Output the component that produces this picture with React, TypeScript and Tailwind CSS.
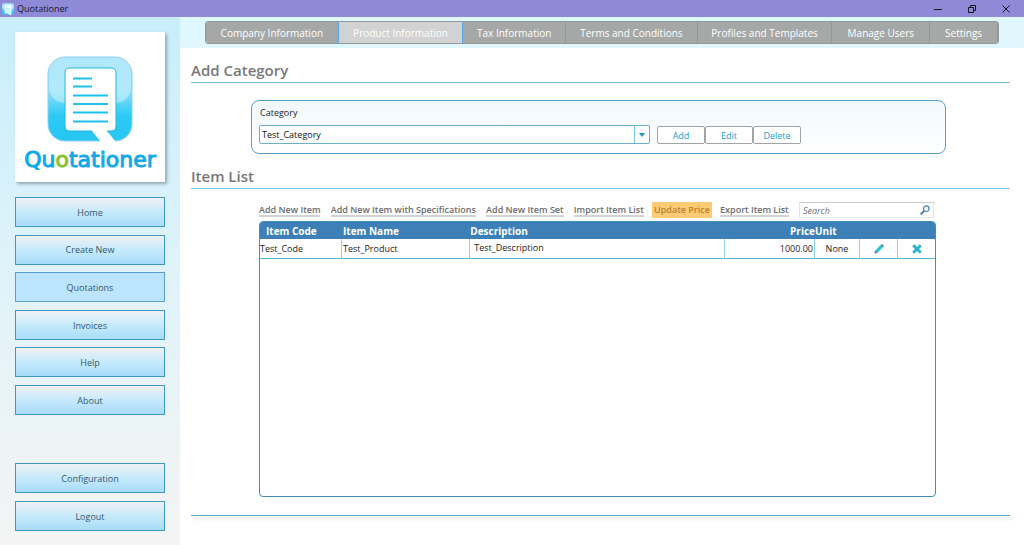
import type { ReactNode } from 'react'

const mainMenu = ['Home', 'Create New', 'Quotations', 'Invoices', 'Help', 'About']
const accountMenu = ['Configuration', 'Logout']

const tabs = [
  'Company Information',
  'Product Information',
  'Tax Information',
  'Terms and Conditions',
  'Profiles and Templates',
  'Manage Users',
  'Settings',
]

const itemActions = [
  'Add New Item',
  'Add New Item with Specifications',
  'Add New Item Set',
  'Import Item List',
  'Update Price',
  'Export Item List',
]

const items = [
  { code: 'Test_Code', name: 'Test_Product', description: 'Test_Description', price: '1000.00', unit: 'None' },
]

const cell = 'border-r border-b border-r-[#8fd3e6] border-b-[#4fb9d6]'

function LogoMark({ className }: { className: string }) {
  return (
    <svg viewBox="0 0 86 86" className={className} aria-hidden>
      <defs>
        <linearGradient id="tile" x1="0" y1="0" x2="0" y2="1">
          <stop offset="0" stopColor="#a9e6fb" />
          <stop offset="0.4" stopColor="#8fe0f9" />
          <stop offset="0.7" stopColor="#2ccaf5" />
          <stop offset="1" stopColor="#27c6f3" />
        </linearGradient>
        <linearGradient id="gloss" x1="0" y1="0" x2="0" y2="1">
          <stop offset="0" stopColor="#fff" stopOpacity="0.1" />
          <stop offset="1" stopColor="#fff" stopOpacity="0.4" />
        </linearGradient>
      </defs>
      <rect x="1" y="1" width="84" height="84" rx="17" fill="url(#tile)" stroke="#8fd0f2" />
      <path d="M2 18Q2 2 18 2H68Q84 2 84 18V32Q82 47 66 47H20Q4 47 2 32Z" fill="url(#gloss)" />
      <path
        d="M23 12H64Q69 12 69 17V70Q69 75 64 75H60L69 86H54L45 75H23Q18 75 18 70V17Q18 12 23 12Z"
        fill="#fff"
      />
      <path
        d="M45 75H23Q18 75 18 70V17Q18 12 23 12H64Q69 12 69 17V70Q69 75 64 75H60"
        fill="none"
        stroke="#22b4e0"
      />
      <path
        d="M26 22.5H45M26 30.5H45M26 39.5H61M26 48H61M26 56.5H61M26 65.5H61"
        stroke="#1fc0ee"
        strokeWidth="2"
      />
    </svg>
  )
}

function TitleBar() {
  return (
    <header className="flex h-[17px] items-center bg-[#8e8ad8] text-[#16161e]">
      <LogoMark className="ml-[2px] h-3 w-3" />
      <span className="ml-[3px] flex-1 text-[9px] leading-none">Quotationer</span>
      <div className="flex items-center gap-[26px] pr-[14px]">
        <button aria-label="Minimize">
          <svg viewBox="0 0 8 8" className="h-2 w-2" fill="none" stroke="currentColor">
            <path d="M0 4.5H8" />
          </svg>
        </button>
        <button aria-label="Restore">
          <svg viewBox="0 0 8 8" className="h-2 w-2" fill="none" stroke="currentColor">
            <path d="M0.5 2.5H5.5V7.5H0.5ZM2.5 2V0.5H7.5V5.5H6" />
          </svg>
        </button>
        <button aria-label="Close">
          <svg viewBox="0 0 8 8" className="h-2 w-2" fill="none" stroke="currentColor">
            <path d="M0.5 0.5L7.5 7.5M7.5 0.5L0.5 7.5" />
          </svg>
        </button>
      </div>
    </header>
  )
}

function MenuButton({ label, active = false }: { label: string; active?: boolean }) {
  return (
    <button
      className={`h-[30px] w-full border pt-px text-[9px] text-[#35596b] ${
        active
          ? 'border-[#5a9fcb] bg-[#bde4fd]'
          : 'border-[#3d98c4] bg-linear-to-b from-[#f0f1f3] via-[#c6eafc] to-[#a8dcf8]'
      }`}
    >
      {label}
    </button>
  )
}

function Sidebar() {
  return (
    <aside className="flex w-[180px] shrink-0 flex-col bg-linear-to-b from-[#c8eefc] via-[#e0f3f9] to-[#f4f4f4] px-[15px] pt-[15px] pb-[14px]">
      <div className="flex h-[150px] flex-col items-center bg-white pt-6 shadow-[2px_2px_3px_#8fa9b3]">
        <LogoMark className="h-[86px] w-[86px]" />
        <span className="mt-1 font-['DejaVu_Sans'] text-[22px] leading-[28px] text-[#12a9ea] [-webkit-text-stroke:1px_#12a9ea]">
          Qu<span className="text-[#8cc234] [-webkit-text-stroke:1px_#8cc234]">o</span>tationer
        </span>
      </div>
      <nav className="mt-[15px] flex h-[218px] flex-col justify-between">
        {mainMenu.map((label) => (
          <MenuButton key={label} label={label} active={label === 'Quotations'} />
        ))}
      </nav>
      <nav className="mt-auto flex flex-col gap-2">
        {accountMenu.map((label) => (
          <MenuButton key={label} label={label} />
        ))}
      </nav>
    </aside>
  )
}

function SectionTitle({ children }: { children: ReactNode }) {
  return (
    <h2 className="border-b border-[#7fc4e2] pb-px text-[15px] leading-[22px] font-semibold text-[#787878]">
      {children}
    </h2>
  )
}

function CategoryForm() {
  return (
    <form className="mt-[17px] mr-[64px] ml-[60px] h-[54px] rounded-[8px] border border-[#5a9fc6] bg-linear-to-b from-[#f1f8fd] to-white px-[7px] pt-[6px]">
      <label htmlFor="category" className="block pl-px text-[9px] leading-[12px] text-[#222]">
        Category
      </label>
      <div className="mt-[6px] flex items-end">
        <div className="relative w-[391px]">
          <select
            id="category"
            className="block h-[19px] w-full appearance-none rounded-[2px] border border-[#6aaed0] bg-white pl-[2px] text-[9px] text-[#111]"
          >
            <option>Test_Category</option>
          </select>
          <span className="pointer-events-none absolute inset-y-px right-px flex w-[15px] items-center justify-center border-l border-[#7cc6e0]">
            <svg viewBox="0 0 6 4" className="h-1 w-[6px]" aria-hidden>
              <path d="M0 0H6L3 4Z" fill="#1797bd" />
            </svg>
          </span>
        </div>
        <div className="ml-[7px] flex">
          {['Add', 'Edit', 'Delete'].map((label) => (
            <button
              key={label}
              type="button"
              className="h-[18px] w-[48px] rounded-[2px] border border-[#a3a3a3] bg-white text-[9px] leading-none text-[#1d9cc9]"
            >
              {label}
            </button>
          ))}
        </div>
      </div>
    </form>
  )
}

function ItemToolbar() {
  return (
    <div className="flex items-center justify-between pr-[2px]">
      {itemActions.map((label) => (
        <button
          key={label}
          className={
            label === 'Update Price'
              ? '-mx-[2px] h-4 bg-[#fdcb74] px-[2px] text-[9px] font-semibold whitespace-nowrap text-[#b5822f]'
              : 'mt-px border-b-2 border-[#d2d2d2] text-[9px] leading-[11px] font-semibold whitespace-nowrap text-[#6c6c6c]'
          }
        >
          {label}
        </button>
      ))}
      <label className="flex h-4 w-[135px] items-center border border-[#e3e3e3] border-t-[#c9c9c9] bg-white px-[3px]">
        <input
          type="text"
          placeholder="Search"
          aria-label="Search"
          className="min-w-0 flex-1 text-[9px] leading-none italic outline-none placeholder:text-[#6e6e6e]"
        />
        <svg viewBox="0 0 10 10" className="h-[10px] w-[10px]" fill="none" aria-hidden>
          <path d="M0.7 9.3L4.2 5.8" stroke="#3a68ac" strokeWidth="1.8" />
          <circle cx="6.3" cy="3.7" r="2.8" stroke="#4a7cc0" strokeWidth="1.2" fill="#f3f8fd" />
        </svg>
      </label>
    </div>
  )
}

function ItemTable() {
  return (
    <div className="mt-[3px] h-[276px] overflow-hidden rounded-[4px] border border-[#3f8fb8] bg-white">
      <table className="w-full table-fixed border-separate border-spacing-0 text-[9px] text-[#1c1c1c]">
        <colgroup>
          <col className="w-[82px]" />
          <col className="w-[19%]" />
          <col />
          <col className="w-[90px]" />
          <col className="w-[45px]" />
          <col className="w-[38px]" />
          <col className="w-[37px]" />
        </colgroup>
        <thead>
          <tr className="h-[17px] bg-[#3d7fb7] text-left text-[10px] leading-none text-white">
            <th className="pl-[6px]">Item Code</th>
            <th className="pl-px">Item Name</th>
            <th>Description</th>
            <th className="text-right">Price</th>
            <th>Unit</th>
            <th aria-label="Edit" />
            <th aria-label="Delete" />
          </tr>
        </thead>
        <tbody>
          {items.map((item) => (
            <tr key={item.code} className="h-[20px] leading-none">
              <td className={cell}>{item.code}</td>
              <td className={`pl-px ${cell}`}>{item.name}</td>
              <td className={`pb-[2px] pl-1 ${cell}`}>{item.description}</td>
              <td className={`pr-px text-right ${cell}`}>{item.price}</td>
              <td className={`text-center ${cell}`}>{item.unit}</td>
              <td className={cell}>
                <button aria-label="Edit item" className="mx-auto block">
                  <svg viewBox="0 0 10 10" className="h-[10px] w-[10px]" aria-hidden>
                    <path d="M1.5 6.2L6.6 1.1L8.9 3.4L3.8 8.5Z" fill="#2fc0d8" />
                    <path d="M6.6 1.1L7.4 0.4Q8.1 0 8.8 0.6L9.5 1.3Q10 1.9 9.6 2.6L8.9 3.4Z" fill="#3f86a8" />
                    <path d="M1.5 6.2L3.8 8.5L0.2 9.8Z" fill="#5767a0" />
                  </svg>
                </button>
              </td>
              <td className="border-b border-b-[#4fb9d6]">
                <button aria-label="Delete item" className="mx-auto block">
                  <svg viewBox="0 0 10 10" className="h-[10px] w-[10px]" aria-hidden>
                    <path d="M1.2 1.2L8.8 8.8M8.8 1.2L1.2 8.8" stroke="#2bb5cc" strokeWidth="3" />
                  </svg>
                </button>
              </td>
            </tr>
          ))}
        </tbody>
      </table>
    </div>
  )
}

export default function App() {
  return (
    <div className="flex min-h-screen flex-col bg-white font-['Open_Sans','Noto_Sans',sans-serif]">
      <TitleBar />
      <div className="flex flex-1">
        <Sidebar />
        <main className="min-w-0 flex-1">
          <div className="bg-[#e0f7fd] px-[25px] py-1">
            <nav className="grid h-[23px] grid-cols-[133fr_125fr_103fr_132fr_135fr_98fr_68fr] overflow-hidden rounded-[3px] border border-[#8f9a9c]">
              {tabs.map((label) => (
                <button
                  key={label}
                  className={`border-r border-[#55a6ea] text-[10px] leading-none font-medium whitespace-nowrap text-white ${
                    label === 'Product Information' ? 'bg-[#d2d2d2]' : 'bg-[#a5a8a7]'
                  }`}
                >
                  {label}
                </button>
              ))}
            </nav>
          </div>
          <div className="pt-[11px] pr-[14px] pl-[11px]">
            <SectionTitle>Add Category</SectionTitle>
            <CategoryForm />
            <div className="mt-[11px]">
              <SectionTitle>Item List</SectionTitle>
            </div>
            <section className="mt-[13px] mr-[74px] ml-[68px]">
              <ItemToolbar />
              <ItemTable />
            </section>
            <hr className="mt-[18px] h-px border-0 bg-[#5fabd2] shadow-[3px_3px_3px_#d5d5d5]" />
          </div>
        </main>
      </div>
    </div>
  )
}
